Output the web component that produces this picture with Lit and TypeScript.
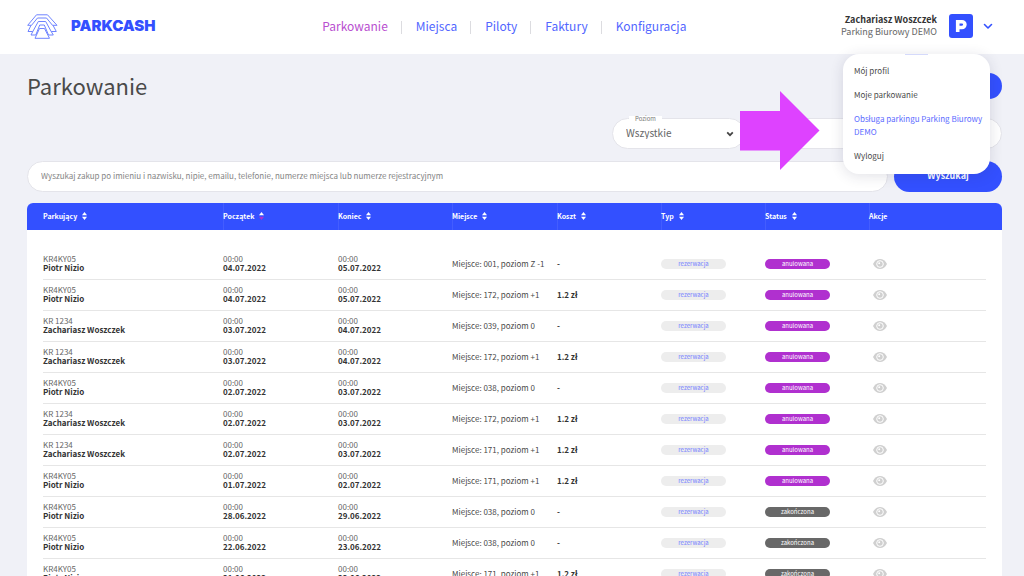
import { LitElement, html, css, svg } from "lit";
import { customElement, state } from "lit/decorators.js";

interface Row {
  plate: string;
  name: string;
  from: string;
  to: string;
  place: string;
  cost: string;
  done?: boolean;
}

const PN = { plate: "KR4KY05", name: "Piotr Nizio" };
const ZW = { plate: "KR 1234", name: "Zachariasz Woszczek" };

const ROWS: Row[] = [
  { ...PN, from: "04.07.2022", to: "05.07.2022", place: "Miejsce: 001, poziom Z -1", cost: "-" },
  { ...PN, from: "04.07.2022", to: "05.07.2022", place: "Miejsce: 172, poziom +1", cost: "1.2 zł" },
  { ...ZW, from: "03.07.2022", to: "04.07.2022", place: "Miejsce: 039, poziom 0", cost: "-" },
  { ...ZW, from: "03.07.2022", to: "04.07.2022", place: "Miejsce: 172, poziom +1", cost: "1.2 zł" },
  { ...PN, from: "02.07.2022", to: "03.07.2022", place: "Miejsce: 038, poziom 0", cost: "-" },
  { ...ZW, from: "02.07.2022", to: "03.07.2022", place: "Miejsce: 172, poziom +1", cost: "1.2 zł" },
  { ...ZW, from: "02.07.2022", to: "03.07.2022", place: "Miejsce: 171, poziom +1", cost: "1.2 zł" },
  { ...PN, from: "01.07.2022", to: "02.07.2022", place: "Miejsce: 171, poziom +1", cost: "1.2 zł" },
  { ...PN, from: "28.06.2022", to: "29.06.2022", place: "Miejsce: 038, poziom 0", cost: "-", done: true },
  { ...PN, from: "22.06.2022", to: "23.06.2022", place: "Miejsce: 038, poziom 0", cost: "-", done: true },
  { ...PN, from: "21.06.2022", to: "22.06.2022", place: "Miejsce: 171, poziom +1", cost: "1.2 zł", done: true },
];

const COLUMNS = [
  { label: "Parkujący", width: 180 },
  { label: "Początek", width: 115, active: true },
  { label: "Koniec", width: 114 },
  { label: "Miejsce", width: 105 },
  { label: "Koszt", width: 104 },
  { label: "Typ", width: 104 },
  { label: "Status", width: 104 },
  { label: "Akcje", width: 117, fixed: true },
];
const TOTAL = COLUMNS.reduce((sum, c) => sum + c.width, 32);

const chevron = svg`<path d="M1.5 1.5 5 5 8.5 1.5" fill="none" stroke="currentColor" stroke-width="1.6" stroke-linecap="round" stroke-linejoin="round"/>`;

@customElement("app-root")
export class AppRoot extends LitElement {
  @state() private menuOpen = true;

  static styles = css`
    :host {
      display: block;
      height: 100vh;
      overflow: hidden;
      background: #f0f1f7;
      color: #4a4a4a;
      font-family: "Noto Sans CJK JP", "Noto Sans", sans-serif;
      font-size: 8px;
      line-height: 12px;
    }
    * { box-sizing: border-box; }
    a { color: inherit; text-decoration: none; }
    button, input, select { font: inherit; color: inherit; border: 0; margin: 0; }
    button { cursor: pointer; }
    svg { display: block; }

    header {
      display: flex;
      align-items: center;
      justify-content: space-between;
      height: 54px;
      padding: 0 31px 2px 27px;
      background: #fff;
    }
    .brand {
      display: flex;
      align-items: center;
      gap: 13px;
      color: #3350ff;
      font: 900 15px/20px Inter, sans-serif;
    }
    nav {
      display: flex;
      align-items: center;
      padding-left: 12px;
      color: #5266ff;
      font-size: 12px;
      line-height: 20px;
    }
    nav a + a::before {
      content: "";
      display: inline-block;
      width: 1px;
      height: 13px;
      margin: 0 14px 0 13px;
      background: #dcdce0;
      vertical-align: -3px;
    }
    nav .current { color: #b94fd0; }
    .account { position: relative; display: flex; align-items: center; }
    .toggle {
      display: flex;
      align-items: center;
      padding: 0;
      background: none;
      font-size: 9px;
      line-height: 12px;
      text-align: right;
      color: #666;
    }
    .toggle strong { display: block; color: #333; }
    .badge { margin: 0 10px 0 12px; }
    .caret { color: #3350ff; }
    .menu {
      position: absolute;
      z-index: 3;
      top: 100%;
      right: 3px;
      width: 147px;
      margin: 16px 0 0;
      padding: 5px 4px 6px 11px;
      list-style: none;
      background: #fff;
      border-radius: 16px;
      box-shadow: 0 2px 14px rgba(40, 40, 80, 0.14);
      line-height: 13px;
    }
    .menu::before {
      content: "";
      position: absolute;
      top: 0;
      left: 62px;
      width: 23px;
      height: 1px;
      background: #d5dafb;
    }
    .menu a { display: block; padding: 5px 0 6px; }
    .menu .current { color: #5c6bff; }

    main { padding: 0 22px 0 27px; }
    .title {
      display: flex;
      align-items: center;
      justify-content: space-between;
      height: 64px;
    }
    h1 { margin: 0 0 2px; font-size: 22px; line-height: 32px; font-weight: 400; }
    .add {
      width: 108px;
      height: 26px;
      border-radius: 13px;
      background: #3350ff;
      color: #fff;
    }
    .filters { display: flex; justify-content: flex-end; gap: 6px; }
    .field { position: relative; width: 133px; }
    .field.wide { width: 251px; }
    .field label {
      position: absolute;
      left: 17px;
      top: -4px;
      padding: 0 6px;
      background: linear-gradient(#f0f1f7 2px, #fff 2px);
      font-size: 6px;
      line-height: 9px;
      color: #777;
    }
    .field select, .search input {
      width: 100%;
      height: 31px;
      padding: 0 13px 2px;
      border: 1px solid #e4e4ea;
      border-radius: 16px;
      background: #fff;
      color: #666;
    }
    .field select { appearance: none; font-size: 10px; }
    .field svg { position: absolute; right: 11px; top: 13px; color: #444; }
    .field .pointer { z-index: 2; right: auto; left: 128px; top: -27px; }

    .search { display: flex; gap: 6px; margin: 12px 0 11px; }
    .search input { flex: 1; }
    .search input::placeholder { color: #858585; opacity: 1; }
    .search button {
      width: 108px;
      height: 31px;
      padding: 0 0 2px;
      border-radius: 16px;
      background: #3350ff;
      color: #fff;
      font-size: 9px;
      font-weight: 700;
    }

    table {
      width: 100%;
      table-layout: fixed;
      border-collapse: separate;
      border-spacing: 0;
      background: #fff;
      border-radius: 6px 6px 0 0;
      overflow: hidden;
    }
    tr::before, tr::after { content: ""; display: table-cell; }
    th, td { padding: 0 0 2px; text-align: left; white-space: nowrap; }
    thead { background: #3350ff; color: #fff; font-size: 7px; }
    th { height: 27px; font-weight: 700; }
    th + th { box-shadow: inset 1px 0 rgba(255, 255, 255, 0.08); }
    .sort { display: inline-flex; align-items: center; gap: 5px; padding: 0; background: none; font-weight: 700; }
    tbody td { height: 31px; border-bottom: 1px solid #e6e6e6; line-height: 9px; vertical-align: middle; }
    tbody .spacer td { height: 19px; border: 0; }
    td small { display: block; font-size: inherit; color: #666; }
    td strong { display: block; color: #333; }
    .pill {
      display: block;
      width: 65px;
      height: 10px;
      margin-top: 2px;
      border-radius: 5px;
      background: #ededed;
      color: #7480ff;
      font-size: 6px;
      line-height: 9px;
      text-align: center;
    }
    .pill.cancelled { background: #b030cf; color: #fff; }
    .pill.done { background: #686868; color: #fff; }
    .view { display: block; margin: 2px 0 0 4px; padding: 0; background: none; }
  `;

  private sortIcon(active?: boolean) {
    return html`<svg width="5" height="8" viewBox="0 0 5 8" aria-hidden="true">
      <path d="M0 3.200 2.500 0 5 3.200z" fill="#fff" />
      <path d="M0 4.800 2.500 8 5 4.800z" fill=${active ? "#b030cf" : "#fff"} />
    </svg>`;
  }

  private row(r: Row) {
    return html`<tr>
      <td><small>${r.plate}</small><strong>${r.name}</strong></td>
      <td><small>00:00</small><strong>${r.from}</strong></td>
      <td><small>00:00</small><strong>${r.to}</strong></td>
      <td>${r.place}</td>
      <td><strong>${r.cost}</strong></td>
      <td><span class="pill">rezerwacja</span></td>
      <td><span class="pill ${r.done ? "done" : "cancelled"}">${r.done ? "zakończona" : "anulowana"}</span></td>
      <td>
        <button class="view" aria-label="Podgląd">
          <svg width="14" height="10" viewBox="0 0 14 10">
            <path d="M0 5C1.600 1.800 4.100 0 7 0s5.400 1.800 7 5c-1.600 3.200-4.100 5-7 5S1.600 8.200 0 5z" fill="#d0d0d0" />
            <circle cx="7" cy="5" r="3.300" fill="#d0d0d0" stroke="#fff" stroke-width="1" />
            <circle cx="6.200" cy="4.200" r="1" fill="#fff" />
          </svg>
        </button>
      </td>
    </tr>`;
  }

  render() {
    return html`
      <header>
        <a class="brand" href="#">
          <svg width="31" height="25" viewBox="0 0 31 25" fill="none" stroke="#6f84ff" stroke-width="1">
            <path d="M9.500 .8H20.500L30 11.300H25.500L19.500 4H10.500L4.500 11.300H.7z" />
            <path d="M4 11.300 1 17.500H5.800L11.300 7.500H18.700L24.200 17.500H29.300L26 11.300" />
            <path d="M5.800 17.500 4 21H8.800L12.700 11H17.300L21.500 21H26.300L24.200 17.500" />
            <path d="M12.500 14.500H17.500L22.500 24.300H8z" />
          </svg>
          <span>PARKCASH</span>
        </a>
        <nav>
          <a class="current" href="#">Parkowanie</a>
          <a href="#">Miejsca</a>
          <a href="#">Piloty</a>
          <a href="#">Faktury</a>
          <a href="#">Konfiguracja</a>
        </nav>
        <div class="account">
          <button class="toggle" aria-expanded=${this.menuOpen} @click=${() => (this.menuOpen = !this.menuOpen)}>
            <span><strong>Zachariasz Woszczek</strong>Parking Biurowy DEMO</span>
            <svg class="badge" width="24" height="24" viewBox="0 0 24 24">
              <rect width="24" height="24" rx="3" fill="#3350ff" />
              <path d="M8.700 18V7.700h4.300a2.900 2.900 0 0 1 0 5.800H9" fill="none" stroke="#fff" stroke-width="3.600" />
            </svg>
            <svg class="caret" width="10" height="7" viewBox="0 0 10 7">${chevron}</svg>
          </button>
          ${this.menuOpen
            ? html`<ul class="menu">
                <li><a href="#">Mój profil</a></li>
                <li><a href="#">Moje parkowanie</a></li>
                <li><a class="current" href="#">Obsługa parkingu Parking Biurowy DEMO</a></li>
                <li><a href="#">Wyloguj</a></li>
              </ul>`
            : null}
        </div>
      </header>
      <main>
        <div class="title">
          <h1>Parkowanie</h1>
          <button class="add" aria-label="Dodaj"></button>
        </div>
        <div class="filters">
          <div class="field">
            <label for="level">Poziom</label>
            <select id="level"><option>Wszystkie</option></select>
            <svg width="8" height="6" viewBox="0 0 10 7">
              <path d="M1.500 1.500 5 5 8.500 1.500" fill="none" stroke="currentColor" stroke-width="2.200" />
            </svg>
            <svg class="pointer" width="80" height="80" viewBox="0 0 80 80" aria-hidden="true">
              <path d="M0 20H40V0L79.500 39.500 40 79V59.500H0z" fill="#de42ff" />
            </svg>
          </div>
          <div class="field wide">
            <select aria-label="Zakres"><option></option></select>
          </div>
        </div>
        <form class="search" @submit=${(e: Event) => e.preventDefault()}>
          <input
            type="search"
            aria-label="Wyszukaj zakup"
            placeholder="Wyszukaj zakup po imieniu i nazwisku, nipie, emailu, telefonie, numerze miejsca lub numerze rejestracyjnym"
          />
          <button>Wyszukaj</button>
        </form>
        <table>
          <colgroup>
            <col style="width:${(16 / TOTAL) * 100}%" />
            ${COLUMNS.map((c) => html`<col style="width:${(c.width / TOTAL) * 100}%" />`)}
            <col style="width:${(16 / TOTAL) * 100}%" />
          </colgroup>
          <thead>
            <tr>
              ${COLUMNS.map(
                (c) => html`<th scope="col">
                  ${c.fixed ? c.label : html`<button class="sort">${c.label} ${this.sortIcon(c.active)}</button>`}
                </th>`
              )}
            </tr>
          </thead>
          <tbody>
            <tr class="spacer"><td colspan="8"></td></tr>
            ${ROWS.map((r) => this.row(r))}
          </tbody>
        </table>
      </main>
    `;
  }
}
